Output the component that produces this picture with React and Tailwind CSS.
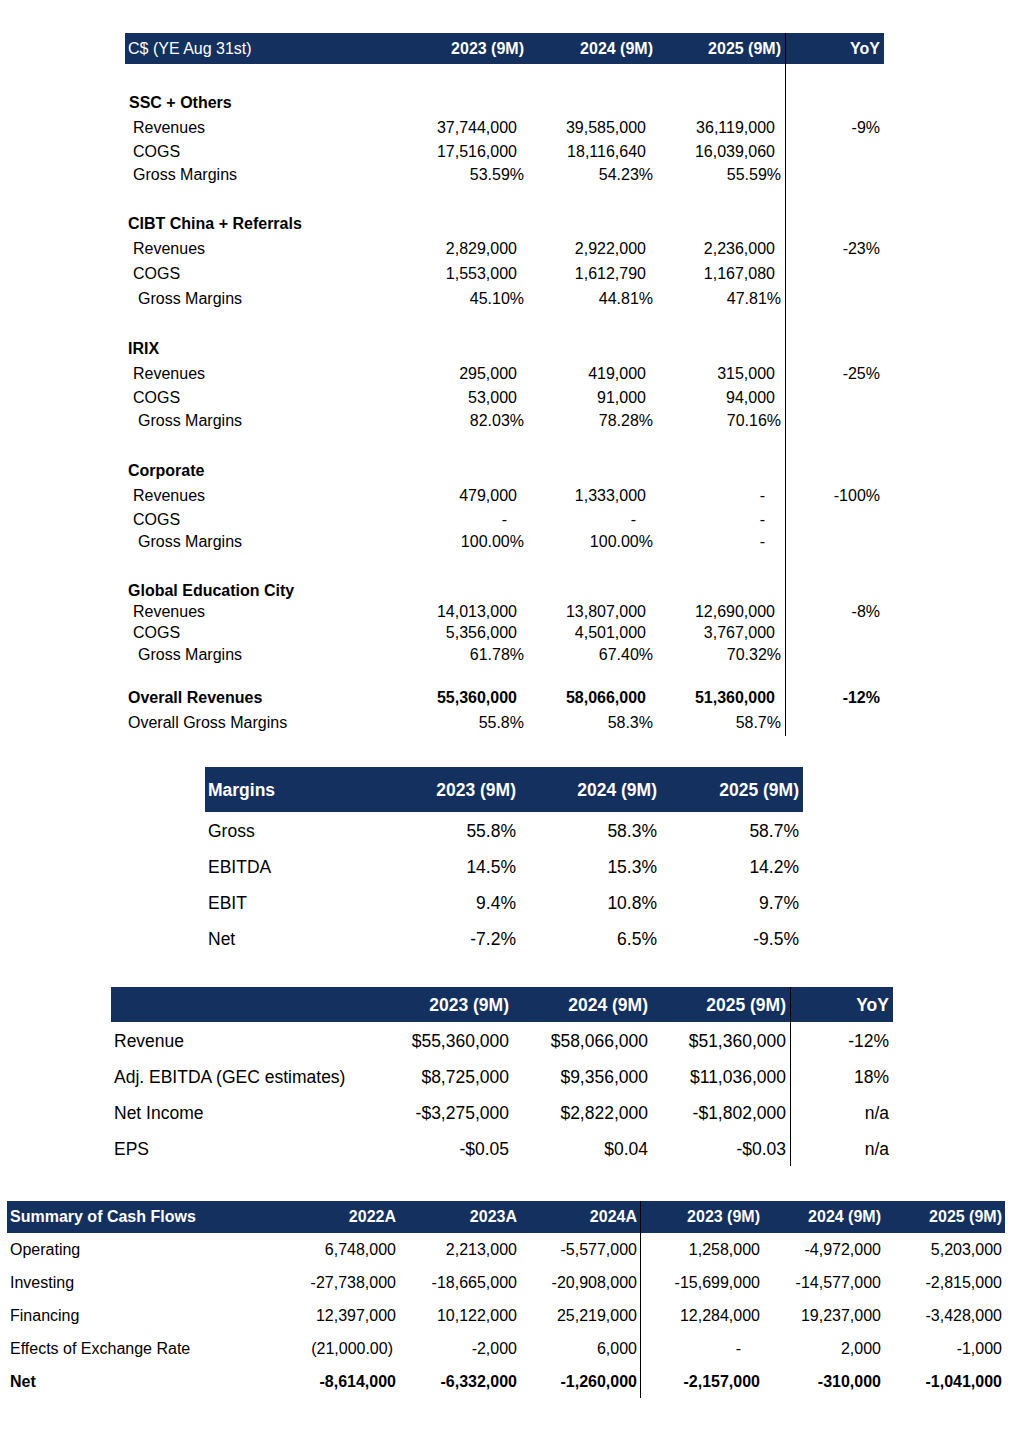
import React from "react";

const HDR = "bg-[#14305e]";

function padT1(v, i) {
  if (v === undefined || v === "") return "pr-[3px]";
  if (v === "-") return "pr-[20px]";
  if (v.endsWith("%")) return i === 2 ? "pr-[4px]" : "pr-[3px]";
  return "pr-[10px]";
}

const t1 = [
  { h: "h-[26px]" },
  { label: "SSC + Others", bold: true, ind: "pl-[4px]", h: "h-[25px]" },
  { label: "Revenues", ind: "pl-[8px]", h: "h-[24px]", v: ["37,744,000", "39,585,000", "36,119,000"], yoy: "-9%" },
  { label: "COGS", ind: "pl-[8px]", h: "h-[23px]", v: ["17,516,000", "18,116,640", "16,039,060"] },
  { label: "Gross Margins", ind: "pl-[8px]", h: "h-[49px]", v: ["53.59%", "54.23%", "55.59%"] },
  { label: "CIBT China + Referrals", bold: true, ind: "pl-[3px]", h: "h-[25px]" },
  { label: "Revenues", ind: "pl-[8px]", h: "h-[25px]", v: ["2,829,000", "2,922,000", "2,236,000"], yoy: "-23%" },
  { label: "COGS", ind: "pl-[8px]", h: "h-[25px]", v: ["1,553,000", "1,612,790", "1,167,080"] },
  { label: "Gross Margins", ind: "pl-[13px]", h: "h-[50px]", v: ["45.10%", "44.81%", "47.81%"] },
  { label: "IRIX", bold: true, ind: "pl-[3px]", h: "h-[25px]" },
  { label: "Revenues", ind: "pl-[8px]", h: "h-[24px]", v: ["295,000", "419,000", "315,000"], yoy: "-25%" },
  { label: "COGS", ind: "pl-[8px]", h: "h-[23px]", v: ["53,000", "91,000", "94,000"] },
  { label: "Gross Margins", ind: "pl-[13px]", h: "h-[50px]", v: ["82.03%", "78.28%", "70.16%"] },
  { label: "Corporate", bold: true, ind: "pl-[3px]", h: "h-[25px]" },
  { label: "Revenues", ind: "pl-[8px]", h: "h-[24px]", v: ["479,000", "1,333,000", "-"], yoy: "-100%" },
  { label: "COGS", ind: "pl-[8px]", h: "h-[22px]", v: ["-", "-", "-"] },
  { label: "Gross Margins", ind: "pl-[13px]", h: "h-[49px]", v: ["100.00%", "100.00%", "-"] },
  { label: "Global Education City", bold: true, ind: "pl-[3px]", h: "h-[21px]" },
  { label: "Revenues", ind: "pl-[8px]", h: "h-[21px]", v: ["14,013,000", "13,807,000", "12,690,000"], yoy: "-8%" },
  { label: "COGS", ind: "pl-[8px]", h: "h-[22px]", v: ["5,356,000", "4,501,000", "3,767,000"] },
  { label: "Gross Margins", ind: "pl-[13px]", h: "h-[43px]", v: ["61.78%", "67.40%", "70.32%"] },
  { label: "Overall Revenues", bold: true, boldVals: true, ind: "pl-[3px]", h: "h-[25px]", v: ["55,360,000", "58,066,000", "51,360,000"], yoy: "-12%" },
  { label: "Overall Gross Margins", ind: "pl-[3px]", h: "h-[25px]", v: ["55.8%", "58.3%", "58.7%"] },
];

function Table1() {
  return (
    <div className="ml-[125px] w-[759px] pt-[33px] text-[16px] text-black">
      <div className={`grid grid-cols-[273px_129px_129px_130px_98px] h-[31px] ${HDR} text-white`}>
        <div className="flex items-center pl-[3px] whitespace-nowrap">C$ (YE Aug 31st)</div>
        <div className="flex items-center justify-end pr-[3px] font-bold">2023 (9M)</div>
        <div className="flex items-center justify-end pr-[3px] font-bold">2024 (9M)</div>
        <div className="flex items-center justify-end pr-[4px] font-bold border-r border-black">2025 (9M)</div>
        <div className="flex items-center justify-end pr-[4px] font-bold">YoY</div>
      </div>
      {t1.map((r, idx) => (
        <div key={idx} className={`grid grid-cols-[273px_129px_129px_130px_98px] leading-[26px] ${r.h}`}>
          <div className={`${r.ind || ""} whitespace-nowrap ${r.bold ? "font-bold" : ""}`}>{r.label}</div>
          {[0, 1, 2].map((i) => {
            const v = r.v ? r.v[i] : "";
            return (
              <div
                key={i}
                className={`text-right ${padT1(v, i)} ${r.boldVals ? "font-bold" : ""} ${i === 2 ? "border-r border-black" : ""}`}
              >
                {v}
              </div>
            );
          })}
          <div className={`text-right pr-[4px] ${r.boldVals ? "font-bold" : ""}`}>{r.yoy}</div>
        </div>
      ))}
    </div>
  );
}

const t2 = [
  ["Gross", "55.8%", "58.3%", "58.7%"],
  ["EBITDA", "14.5%", "15.3%", "14.2%"],
  ["EBIT", "9.4%", "10.8%", "9.7%"],
  ["Net", "-7.2%", "6.5%", "-9.5%"],
];

function Table2() {
  return (
    <div className="ml-[205px] w-[598px] mt-[32px] text-[17.5px] text-black">
      <div className={`grid grid-cols-[174px_141px_141px_142px] h-[45px] ${HDR} text-white font-bold`}>
        <div className="flex items-center pl-[3px] pt-[2px]">Margins</div>
        <div className="flex items-center justify-end pr-[4px] pt-[2px]">2023 (9M)</div>
        <div className="flex items-center justify-end pr-[4px] pt-[2px]">2024 (9M)</div>
        <div className="flex items-center justify-end pr-[4px] pt-[2px]">2025 (9M)</div>
      </div>
      {t2.map((r) => (
        <div key={r[0]} className="grid grid-cols-[174px_141px_141px_142px] h-[36px]">
          <div className="flex items-center pl-[3px] pt-[2px]">{r[0]}</div>
          <div className="flex items-center justify-end pr-[4px] pt-[2px]">{r[1]}</div>
          <div className="flex items-center justify-end pr-[4px] pt-[2px]">{r[2]}</div>
          <div className="flex items-center justify-end pr-[4px] pt-[2px]">{r[3]}</div>
        </div>
      ))}
    </div>
  );
}

const t3 = [
  ["Revenue", "$55,360,000", "$58,066,000", "$51,360,000", "-12%"],
  ["Adj. EBITDA (GEC estimates)", "$8,725,000", "$9,356,000", "$11,036,000", "18%"],
  ["Net Income", "-$3,275,000", "$2,822,000", "-$1,802,000", "n/a"],
  ["EPS", "-$0.05", "$0.04", "-$0.03", "n/a"],
];

function Table3() {
  return (
    <div className="ml-[111px] w-[782px] mt-[31px] text-[17.5px] text-black">
      <div className={`grid grid-cols-[262px_139px_139px_140px_102px] h-[35px] ${HDR} text-white font-bold`}>
        <div></div>
        <div className="flex items-center justify-end pr-[3px] pt-[2px]">2023 (9M)</div>
        <div className="flex items-center justify-end pr-[3px] pt-[2px]">2024 (9M)</div>
        <div className="flex items-center justify-end pr-[4px] pt-[2px] border-r border-black">2025 (9M)</div>
        <div className="flex items-center justify-end pr-[4px] pt-[2px]">YoY</div>
      </div>
      {t3.map((r) => (
        <div key={r[0]} className="grid grid-cols-[262px_139px_139px_140px_102px] h-[36px]">
          <div className="flex items-center pl-[3px] pt-[2px] whitespace-nowrap">{r[0]}</div>
          <div className="flex items-center justify-end pr-[3px] pt-[2px]">{r[1]}</div>
          <div className="flex items-center justify-end pr-[3px] pt-[2px]">{r[2]}</div>
          <div className="flex items-center justify-end pr-[4px] pt-[2px] border-r border-black">{r[3]}</div>
          <div className="flex items-center justify-end pr-[4px] pt-[2px]">{r[4]}</div>
        </div>
      ))}
    </div>
  );
}

const t4 = [
  { label: "Operating", v: ["6,748,000", "2,213,000", "-5,577,000", "1,258,000", "-4,972,000", "5,203,000"] },
  { label: "Investing", v: ["-27,738,000", "-18,665,000", "-20,908,000", "-15,699,000", "-14,577,000", "-2,815,000"] },
  { label: "Financing", v: ["12,397,000", "10,122,000", "25,219,000", "12,284,000", "19,237,000", "-3,428,000"] },
  { label: "Effects of Exchange Rate", v: ["(21,000.00)", "-2,000", "6,000", "-", "2,000", "-1,000"] },
  { label: "Net", bold: true, v: ["-8,614,000", "-6,332,000", "-1,260,000", "-2,157,000", "-310,000", "-1,041,000"] },
];

function padT4(v) {
  if (v === "-") return "pr-[22px]";
  if (v.startsWith("(")) return "pr-[6px]";
  return "pr-[3px]";
}

function Table4() {
  const heads = ["2022A", "2023A", "2024A", "2023 (9M)", "2024 (9M)", "2025 (9M)"];
  return (
    <div className="ml-[7px] w-[998px] mt-[35px] text-[16px] text-black">
      <div className={`grid grid-cols-[271px_121px_121px_121px_122px_121px_121px] h-[32px] ${HDR} text-white font-bold`}>
        <div className="flex items-center pl-[3px] whitespace-nowrap">Summary of Cash Flows</div>
        {heads.map((h, i) => (
          <div key={h} className={`flex items-center justify-end pr-[3px] ${i === 2 ? "border-r border-black" : ""}`}>
            {h}
          </div>
        ))}
      </div>
      {t4.map((r) => (
        <div key={r.label} className={`grid grid-cols-[271px_121px_121px_121px_122px_121px_121px] h-[33px] ${r.bold ? "font-bold" : ""}`}>
          <div className="flex items-center pl-[3px] whitespace-nowrap">{r.label}</div>
          {r.v.map((v, i) => (
            <div key={i} className={`flex items-center justify-end ${padT4(v)} ${i === 2 ? "border-r border-black" : ""}`}>
              {v}
            </div>
          ))}
        </div>
      ))}
    </div>
  );
}

export default function App() {
  return (
    <div className="w-[1016px] min-h-[1430px] bg-white font-['Liberation_Sans',Arial,sans-serif] antialiased">
      <Table1 />
      <Table2 />
      <Table3 />
      <Table4 />
    </div>
  );
}
